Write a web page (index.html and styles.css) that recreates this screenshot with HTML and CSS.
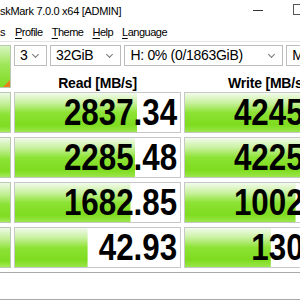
FILE: index.html
```html
<!DOCTYPE html>
<html lang="en">
<head>
    <meta charset="UTF-8">
    <title>CrystalDiskMark</title>
    <link rel="stylesheet" href="styles.css">
</head>
<body>
    <div class="window">
        <div class="titlebar">
            <span class="title">skMark 7.0.0 x64 [ADMIN]</span>
            <span class="caption">
                <span class="btn-min"></span>
                <span class="btn-max"></span>
            </span>
        </div>
        <div class="menubar">
            <span>s</span>
            <span><u>P</u>rofile</span>
            <span><u>T</u>heme</span>
            <span><u>H</u>elp</span>
            <span><u>L</u>anguage</span>
        </div>
        <div class="board">
            <div class="label all"></div>
            <div class="controls">
                <div class="select s-count">3</div>
                <div class="select s-size">32GiB</div>
                <div class="select s-drive">H: 0% (0/1863GiB)</div>
                <div class="select s-unit">MB/s</div>
            </div>
            <div class="head">Read [MB/s]</div>
            <div class="head">Write [MB/s]</div>

            <div class="label"></div>
            <div class="cell" style="--w:74%"><span class="num">2837.34</span></div>
            <div class="cell" style="--w:77%"><span class="num">4245.49</span></div>

            <div class="label"></div>
            <div class="cell" style="--w:73%"><span class="num">2285.48</span></div>
            <div class="cell" style="--w:77%"><span class="num">4225.71</span></div>

            <div class="label"></div>
            <div class="cell" style="--w:70%"><span class="num">1682.85</span></div>
            <div class="cell" style="--w:67%"><span class="num">1002.38</span></div>

            <div class="label"></div>
            <div class="cell" style="--w:44%"><span class="num">42.93</span></div>
            <div class="cell" style="--w:52%"><span class="num">130.36</span></div>
        </div>
        <div class="comment"></div>
    </div>
</body>
</html>
```

FILE: styles.css
```css
body {
    margin: 0;
    width: 300px;
    height: 300px;
    overflow: hidden;
    background: #fff;
    font-family: "Liberation Sans", Arial, sans-serif;
    color: #000;
}
.window {
    width: 360px;
}
.titlebar {
    height: 22px;
    display: flex;
    align-items: center;
    font-size: 11px;
    letter-spacing: -0.3px;
}
.title {
    flex: 1;
}
.caption {
    display: flex;
    align-items: center;
    width: 107px;
}
.btn-min {
    width: 10px;
    height: 1px;
    margin-top: -2px;
    background: #333;
}
.btn-max {
    width: 9px;
    height: 9px;
    margin-left: 30px;
    margin-top: -4px;
    border: 1px solid #555;
}
.menubar {
    height: 19px;
    display: flex;
    align-items: center;
    gap: 9px;
    font-size: 11px;
    letter-spacing: -0.5px;
    border-bottom: 1px solid #e4e4e4;
}
.menubar span:first-child {
    margin-right: 1px;
}
.menubar u {
    text-decoration-thickness: 1px;
    text-underline-offset: 2px;
}
.board {
    display: grid;
    grid-template-columns: 11px 167px 167px;
    grid-template-rows: 21px 18px repeat(4, 41px);
    column-gap: 3px;
    row-gap: 4px;
    padding-top: 3px;
}
.label {
    border: 1px solid #b9c9b0;
    border-left: none;
    background: linear-gradient(to bottom, #eef9e6 0%, #bfee90 30%, #8be234 55%, #7fdc22 85%, #a4ea5a 100%);
}
.all {
    grid-row: 1 / 3;
    position: relative;
    background: linear-gradient(to bottom, #d8f5c0 0%, #9fe65a 45%, #7fdc22 100%);
}
.all::after {
    content: "";
    position: absolute;
    right: 0;
    bottom: 0;
    border-style: solid;
    border-width: 0 0 7px 7px;
    border-color: transparent transparent #e8801e transparent;
}
.controls {
    grid-column: 2 / 4;
    display: flex;
    gap: 3px;
}
.select {
    position: relative;
    border: 1px solid #bdbdbd;
    font-size: 14px;
    letter-spacing: -0.3px;
    line-height: 19px;
    padding-left: 5px;
    white-space: nowrap;
    overflow: hidden;
}
.select::after {
    content: "";
    position: absolute;
    right: 8px;
    top: 6px;
    width: 4px;
    height: 4px;
    border-right: 1px solid #777;
    border-bottom: 1px solid #777;
    transform: rotate(45deg);
}
.s-count { width: 27px; }
.s-size { width: 67px; }
.s-drive { width: 158px; }
.s-unit { width: 60px; }
.head {
    align-self: end;
    text-align: center;
    font-size: 14px;
    letter-spacing: -0.2px;
    font-weight: bold;
    line-height: 14px;
    margin-bottom: -2px;
}
.cell {
    border: 1px solid #c7c7c7;
    background-color: #fff;
    background-image: linear-gradient(to bottom, #f2fbec 0%, #c9f19f 25%, #8de335 50%, #7edc1e 82%, #9be64c 100%);
    background-repeat: no-repeat;
    background-size: var(--w) 100%;
    text-align: right;
    padding-right: 3px;
    font-weight: bold;
    font-size: 36px;
    line-height: 39px;
}
.num {
    display: inline-block;
    transform: scaleX(0.87);
    transform-origin: right center;
}
.comment {
    margin-top: 4px;
    height: 26px;
    border-top: 1px solid #a9a9a9;
    border-bottom: 1px solid #a9a9a9;
}
```
